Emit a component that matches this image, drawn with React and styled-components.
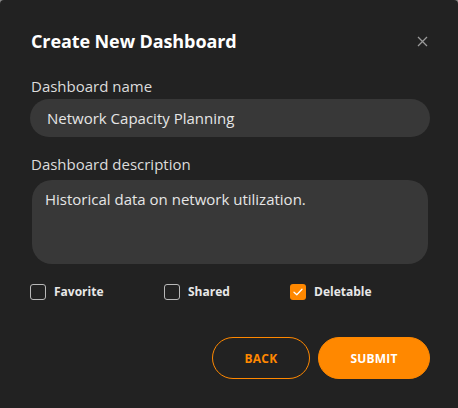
import React, { useState, useEffect, useRef } from 'react';
import styled, { createGlobalStyle } from 'styled-components';

const GlobalStyle = createGlobalStyle`
    html, body {
        margin: 0;
        padding: 0;
        background: #8a8a8a;
    }
    * {
        box-sizing: border-box;
    }
`;

const Dialog = styled.div`
    width: 458px;
    height: 408px;
    background: #222222;
    border-radius: 4px 4px 0 0;
    padding: 29px 28px 0 30px;
    font-family: 'Open Sans', 'Noto Sans', sans-serif;
    color: #e8e8e8;
    display: flex;
    flex-direction: column;
`;

const Header = styled.div`
    display: flex;
    align-items: center;
    justify-content: space-between;
    height: 24px;
`;

const Title = styled.h2`
    margin: 0 0 0 1px;
    font-size: 18px;
    font-weight: 700;
    color: #ffffff;
    letter-spacing: -0.1px;
`;

const CloseButton = styled.button`
    background: none;
    border: none;
    padding: 0;
    width: 14px;
    height: 14px;
    margin-right: 1px;
    color: #9a9a9a;
    display: flex;
    align-items: center;
    justify-content: center;
    cursor: pointer;
`;

const Field = styled.div`
    display: flex;
    flex-direction: column;
    margin-top: ${props => props.top || 0}px;
`;

const Label = styled.label`
    font-size: 15px;
    color: #dcdcdc;
    margin-left: 1px;
    line-height: 20px;
    margin-bottom: ${props => props.gap || 8}px;
`;

const TextInput = styled.input`
    height: 38px;
    width: 400px;
    border: none;
    outline: none;
    border-radius: 19px;
    background: #383838;
    color: #e6e6e6;
    font-family: inherit;
    font-size: 15px;
    padding: 0 17px;
`;

const TextArea = styled.textarea`
    height: 84px;
    width: 396px;
    margin-left: 2px;
    border: none;
    outline: none;
    resize: none;
    border-radius: 20px;
    background: #383838;
    color: #e6e6e6;
    caret-color: #ffffff;
    font-family: inherit;
    font-size: 15px;
    line-height: 20px;
    padding: 9px 13px;
`;

const Options = styled.div`
    display: grid;
    grid-template-columns: 134px 126px auto;
    margin-top: 19px;
`;

const Option = styled.label`
    display: flex;
    align-items: center;
    gap: 8px;
    font-size: 12px;
    font-weight: 700;
    color: #e8e8e8;
    cursor: pointer;
`;

const Box = styled.span`
    width: 16px;
    height: 16px;
    border-radius: 3px;
    border: ${props => (props.checked ? 'none' : '1px solid #b8b8b8')};
    background: ${props => (props.checked ? '#ff8800' : 'transparent')};
    display: flex;
    align-items: center;
    justify-content: center;
`;

const Actions = styled.div`
    display: flex;
    justify-content: flex-end;
    gap: 8px;
    margin-top: 37px;
`;

const Button = styled.button`
    height: 42px;
    width: ${props => props.w}px;
    border-radius: 21px;
    border: 1px solid #ff8800;
    background: ${props => (props.primary ? '#ff8800' : 'transparent')};
    color: ${props => (props.primary ? '#ffffff' : '#ff8800')};
    font-family: inherit;
    font-size: 12px;
    font-weight: 700;
    letter-spacing: 0.2px;
    cursor: pointer;
`;

const Check = () => (
    <svg width="10" height="8" viewBox="0 0 10 8" fill="none">
        <path d="M1 4.2 L3.8 6.8 L9 1.2" stroke="#fff" strokeWidth="1.3" strokeLinecap="round" strokeLinejoin="round" />
    </svg>
);

const App = () => {
    const [opts, setOpts] = useState({ favorite: false, shared: false, deletable: true });
    const descRef = useRef(null);
    const toggle = key => setOpts({ ...opts, [key]: !opts[key] });

    // put the caret after the text, as in an edit in progress
    useEffect(() => {
        const el = descRef.current;
        if (el) {
            el.focus();
            el.setSelectionRange(el.value.length, el.value.length);
        }
    }, []);

    const items = [
        { key: 'favorite', label: 'Favorite' },
        { key: 'shared', label: 'Shared' },
        { key: 'deletable', label: 'Deletable' },
    ];

    return (
        <>
            <GlobalStyle />
            <Dialog>
                <Header>
                    <Title>Create New Dashboard</Title>
                    <CloseButton aria-label="Close">
                        <svg width="11" height="11" viewBox="0 0 11 11">
                            <path d="M1 1 L10 10 M10 1 L1 10" stroke="currentColor" strokeWidth="1.3" />
                        </svg>
                    </CloseButton>
                </Header>
                <Field top={23}>
                    <Label gap={3}>Dashboard name</Label>
                    <TextInput defaultValue="Network Capacity Planning" />
                </Field>
                <Field top={17}>
                    <Label gap={6}>Dashboard description</Label>
                    <TextArea ref={descRef} defaultValue="Historical data on network utilization." />
                </Field>
                <Options>
                    {items.map(item => (
                        <Option key={item.key} onClick={() => toggle(item.key)}>
                            <Box checked={opts[item.key]}>{opts[item.key] && <Check />}</Box>
                            {item.label}
                        </Option>
                    ))}
                </Options>
                <Actions>
                    <Button w={98}>BACK</Button>
                    <Button w={112} primary>SUBMIT</Button>
                </Actions>
            </Dialog>
        </>
    );
};

export default App;
